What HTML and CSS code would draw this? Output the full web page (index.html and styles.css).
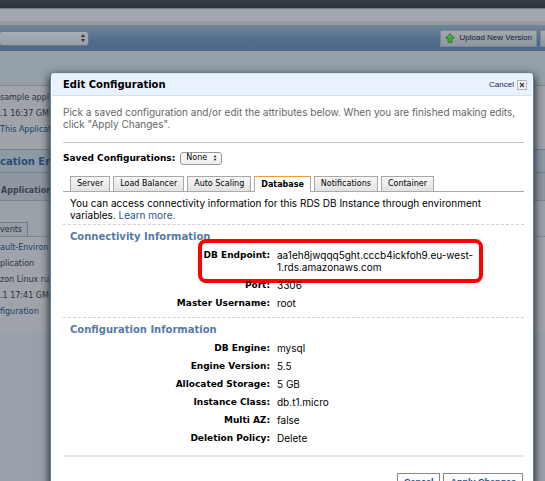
FILE: index.html
```html
<!DOCTYPE html>
<html lang="en">
<head>
<meta charset="utf-8">
<title>Edit Configuration</title>
<link rel="stylesheet" href="styles.css">
</head>
<body>
<div class="page">
  <div class="topbar"></div>
  <div class="subbar"></div>
  <header class="toolbar">
    <select class="app-select" aria-label="Application"><option></option></select>
    <svg class="arrows arrows-app" viewBox="0 0 4 8" aria-hidden="true"><path d="M0 3L2 0L4 3ZM0 5H4L2 8Z"/></svg>
    <div class="actions">
      <button class="tool-btn" type="button">
        <svg class="upload" viewBox="0 0 10 10" aria-hidden="true"><path d="M5 .7L9.3 5H6.9V9.3H3.1V5H.7Z"/></svg>
        Upload New Version
      </button>
      <button class="tool-btn tool-more" type="button" aria-label="More"></button>
    </div>
  </header>
  <div class="spacer"></div>
  <section class="facts">
    <p>sample appl</p>
    <p>.1 16:37 GM</p>
    <p><a href="#">This Applicat</a></p>
  </section>
  <h2 class="band">cation En</h2>
  <h3 class="subband">Application</h3>
  <div class="page-tabs"><button type="button">vents</button></div>
  <section class="facts details">
    <p><a href="#">ault-Environ</a></p>
    <p>plication</p>
    <p>zon Linux ru</p>
    <p>.1 17:41 GM</p>
    <p><a href="#">figuration</a></p>
  </section>
</div>

<div class="dialog" role="dialog" aria-labelledby="title">
  <header class="dialog-head">
    <h1 id="title">Edit Configuration</h1>
    <button class="close" type="button">Cancel
      <svg viewBox="0 0 10 10" aria-hidden="true"><rect x=".5" y=".5" width="9" height="9" fill="#f4f4f4" stroke="#b5b5b5"/><path d="M3 3L7 7M7 3L3 7" stroke="#444" stroke-width="1.3"/></svg>
    </button>
  </header>
  <div class="dialog-body">
    <p class="intro">Pick a saved configuration and/or edit the attributes below. When you are finished making edits, click "Apply Changes".</p>
    <div class="saved">
      <label for="saved">Saved Configurations:</label>
      <span class="picker">
        <select id="saved"><option>None</option></select>
        <svg class="arrows" viewBox="0 0 4 8" aria-hidden="true"><path d="M0 3L2 0L4 3ZM0 5H4L2 8Z"/></svg>
      </span>
    </div>
    <nav class="tabs">
      <button type="button">Server</button>
      <button type="button">Load Balancer</button>
      <button type="button">Auto Scaling</button>
      <button type="button" class="active">Database</button>
      <button type="button">Notifications</button>
      <button type="button">Container</button>
    </nav>
    <p class="note">You can access connectivity information for this RDS DB Instance through environment variables. <a href="#">Learn more.</a></p>
    <section class="group">
      <h2>Connectivity Information</h2>
      <dl>
        <div class="row marked"><dt>DB Endpoint:</dt><dd>aa1eh8jwqqq5ght.cccb4ickfoh9.eu-west-<br>1.rds.amazonaws.com</dd></div>
        <div class="row"><dt>Port:</dt><dd>3306</dd></div>
        <div class="row"><dt>Master Username:</dt><dd>root</dd></div>
      </dl>
    </section>
    <section class="group">
      <h2>Configuration Information</h2>
      <dl>
        <div class="row"><dt>DB Engine:</dt><dd>mysql</dd></div>
        <div class="row"><dt>Engine Version:</dt><dd>5.5</dd></div>
        <div class="row"><dt>Allocated Storage:</dt><dd>5 GB</dd></div>
        <div class="row"><dt>Instance Class:</dt><dd>db.t1.micro</dd></div>
        <div class="row"><dt>Multi AZ:</dt><dd>false</dd></div>
        <div class="row"><dt>Deletion Policy:</dt><dd>Delete</dd></div>
      </dl>
    </section>
    <footer class="dialog-foot">
      <button type="button">Cancel</button>
      <button type="button">Apply Changes</button>
    </footer>
  </div>
</div>
</body>
</html>
```
FILE: styles.css
```css
*, *::after { box-sizing: border-box; }
html, body { height: 100%; }
body {
  margin: 0;
  position: relative;
  overflow: hidden;
  background: #98a1aa;
  font: 10px/12px Inter, Verdana, sans-serif;
  color: #000;
}
h1, h2, h3, p, dl, dd { margin: 0; }
a { color: #2a568e; text-decoration: none; }
button, select { font: inherit; color: inherit; margin: 0; }

.page { color: #2d3239; white-space: nowrap; font: 8px/16px "DejaVu Sans", Verdana, sans-serif; }
.page a { color: #1c3f6a; }
.topbar { height: 8px; background: linear-gradient(#373e46, #2f353c); }
.subbar { height: 17px; background: #a0a7ae; border-top: 1px solid #787e84; border-bottom: 4px solid #969a9c; }
.toolbar {
  position: relative;
  display: flex;
  align-items: center;
  justify-content: space-between;
  height: 26px;
  background: linear-gradient(#718798, #4f6a8b 65%, #4f6989);
}
.app-select {
  appearance: none;
  width: 90px;
  height: 15px;
  margin-left: -1px;
  border: 1px solid #6b7886;
  border-radius: 3px;
  background: linear-gradient(#a6adb4, #979fa8);
}
.arrows { width: 4px; height: 8px; fill: #333; }
.arrows-app { position: absolute; left: 81px; }
.actions { display: flex; gap: 3px; }
.tool-btn {
  display: flex;
  align-items: center;
  gap: 5px;
  height: 17px;
  padding: 0 4px;
  border: 1px solid #7c8793;
  background: linear-gradient(#a4a9af, #8f969e);
  color: #111a33;
  font: 8px/12px "Liberation Sans", Arial, sans-serif;
}
.tool-more { width: 5px; padding: 0; border-right: 0; }
.upload { width: 10px; height: 10px; fill: #4da348; stroke: #2b7a2c; }
.spacer { height: 35px; background: #949fa7; border-bottom: 1px solid #7e8890; }
.facts { padding: 4px 0 11px; background: #9ea4a9; }
.facts p { height: 16px; }
.band {
  height: 24px;
  border: solid #78828b;
  border-width: 1px 0;
  background: #8d99a5;
  color: #294c77;
  font-size: 10px;
  line-height: 23px;
}
.subband {
  height: 28px;
  padding: 9px 0 0 1px;
  border-bottom: 1px solid #7b858e;
  background: #8f98a1;
  color: #3c444d;
  font-size: 8px;
  line-height: 18px;
}
.page-tabs { display: flex; height: 36px; align-items: flex-end; border-bottom: 1px solid #7b858e; background: #9aa2a9; }
.page-tabs button {
  height: 14px;
  width: 28px;
  padding: 0;
  border: 1px solid #727b84;
  border-width: 1px 1px 0 0;
  background: #959da5;
  line-height: 12px;
  text-align: left;
}
.details { padding: 3px 0 12px; }

.dialog {
  position: absolute;
  top: 73px;
  left: 50px;
  right: 11px;
  bottom: -40px;
  padding: 0 1px;
  border: 1px solid #5c8199;
  border-top-color: #d2e5f2;
  border-radius: 4px;
  background: #fff;
  box-shadow: 0 3px 9px 1px #22292f;
}
.dialog-head {
  display: flex;
  align-items: center;
  justify-content: space-between;
  height: 22px;
  padding: 0 5px 0 11px;
  border-bottom: 1px solid #cfe3f2;
  background: #eaf2ff;
}
.dialog h1, .dialog h2 { font: bold 10px/13px "DejaVu Sans", Verdana, sans-serif; }
.dialog label, .dialog dt { font: bold 9px/12px "DejaVu Sans", Verdana, sans-serif; }
.close {
  display: flex;
  align-items: center;
  gap: 3px;
  padding: 0;
  border: 0;
  background: none;
  color: #1b2450;
  font: 8px/12px "Liberation Sans", Arial, sans-serif;
}
.close svg { width: 10px; height: 10px; }
.dialog-body { padding: 10px 8px 0 11px; }
.intro { padding-bottom: 12px; border-bottom: 1px solid #c6c6c6; color: #666; }
.saved { display: flex; align-items: center; gap: 5px; height: 33px; padding-bottom: 3px; }
.picker { position: relative; display: flex; align-items: center; }
.picker select {
  appearance: none;
  width: 42px;
  height: 13px;
  padding: 0 5px;
  border: 1px solid #999;
  border-radius: 3px;
  background: linear-gradient(#fff, #ececec);
  font: 8px/10px "DejaVu Sans", Verdana, sans-serif;
}
.picker .arrows { position: absolute; right: 5px; height: 6px; }
.tabs { display: flex; gap: 3px; align-items: flex-end; height: 16px; padding-left: 7px; border-bottom: 1px solid #aaa; }
.tabs button {
  height: 15px;
  padding: 0 6px;
  border: 1px solid #a8a8a8;
  border-bottom: 0;
  background: linear-gradient(#f6f6f6, #e2e2e2);
  font: 8px/12px "DejaVu Sans", Verdana, sans-serif;
}
.tabs .active { height: 16px; margin-bottom: -1px; border-top-color: #f19a38; background: #fff; font-weight: bold; }
.note { padding: 5px 7px 3px; }
.group { padding: 5px 7px 0; border-top: 1px dashed #d2d2d2; }
.group h2 { color: #5679a8; }
.group dl { padding: 3px 0 5px; }
.row { position: relative; display: flex; gap: 7px; padding: 3px 0; }
.row dt { width: 200px; text-align: right; }
.marked::after {
  content: "";
  position: absolute;
  top: -7px;
  left: 128px;
  width: 285px;
  height: 44px;
  border: 4px solid #f00;
  border-radius: 8px;
}
.dialog-foot { display: flex; justify-content: flex-end; gap: 3px; margin-top: 3px; padding: 16px 1px 0; border-top: 2px solid #e8e8e8; }
.dialog-foot button {
  height: 18px;
  padding: 0 6px;
  border: 1px solid #888;
  background: linear-gradient(#fff, #eee);
  color: #234f8c;
  font: bold 9px/14px "Liberation Sans", Arial, sans-serif;
}
```
